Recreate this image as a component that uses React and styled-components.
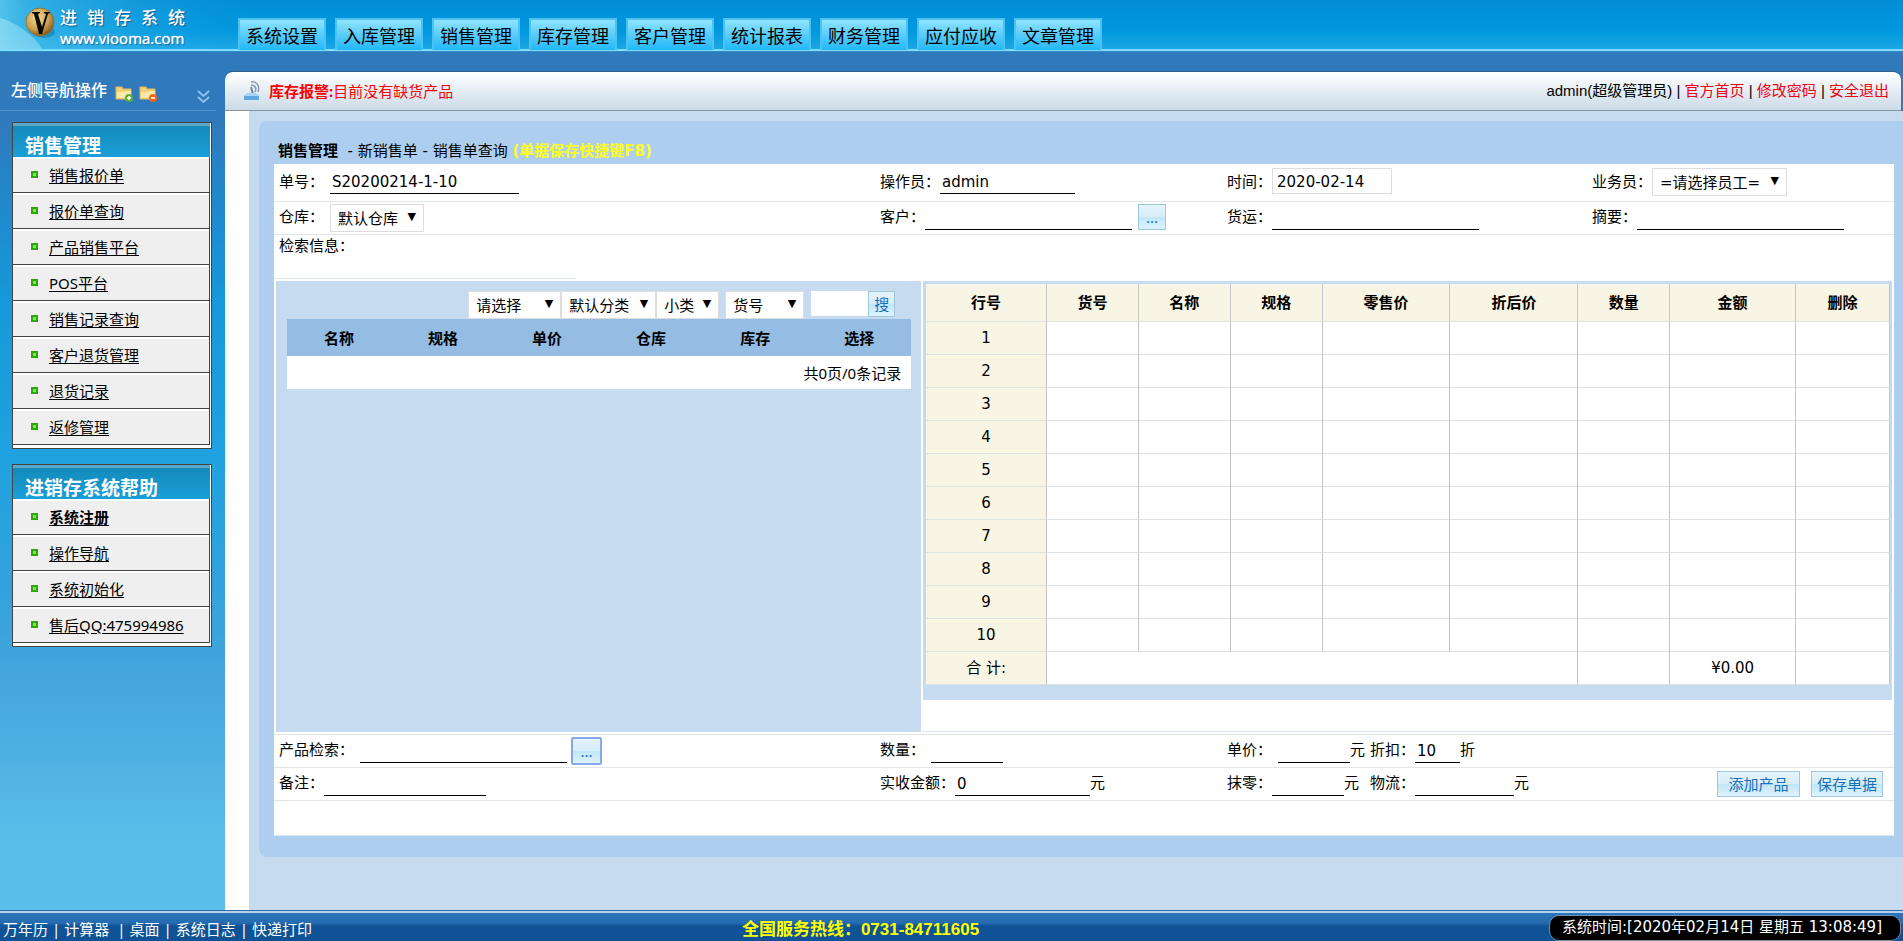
import React from 'react';
import styled, { createGlobalStyle, css } from 'styled-components';

const uiFont = '"Noto Sans", "Noto Sans CJK SC", sans-serif';
const dataFont = '"DejaVu Sans", "Noto Sans CJK SC", sans-serif';

const GlobalStyle = createGlobalStyle`
  *, *::before, *::after { box-sizing: border-box; }
  body { margin: 0; background: #c6dbf0; color: #000; font: 15px/20px ${uiFont}; }
  a { color: inherit; text-decoration: none; }
  button, input, select { margin: 0; font: 15px/20px ${dataFont}; color: #000; border-radius: 0; }
`;

const Page = styled.div`
  min-height: 100vh;
  display: flex;
  flex-direction: column;
`;

/* ---------- top banner ---------- */

const Banner = styled.header`
  position: relative;
  display: flex;
  align-items: flex-end;
  height: 52px;
  background: linear-gradient(#008dd6 0, #0097de 30px, #1ba6e4 48px, #1ba6e4 49px, #7fdcfb 49px, #7fdcfb 51px, #2f8ccb 51px);
`;

const BannerArt = styled.svg`
  position: absolute;
  left: 0;
  top: 0;
`;

const Brand = styled.div`
  position: relative;
  display: flex;
  flex: none;
  width: 238px;
  height: 52px;
  padding: 6px 0 0 26px;
  gap: 5px;
  color: #fff;
`;

const BrandName = styled.div`
  display: flex;
  gap: 10px;
  font: 500 17px/22px "Noto Sans CJK SC", sans-serif;
  text-shadow: 1px 1px 1px #0b5c94;
`;

const BrandUrl = styled.div`
  font: 15px/20px "Open Sans", sans-serif;
  text-shadow: 0 0 1px #fff, 1px 1px 1px #0b5c94;
`;

const Tabs = styled.nav`
  position: relative;
  display: flex;
  gap: 9px;
  padding-bottom: 2px;
`;

const Tab = styled.a`
  width: 88px;
  height: 32px;
  border: 2px solid #4cc2f0;
  border-bottom: 0;
  background: linear-gradient(#8fe4ff, #4dc8fb 60%, #22b8fb);
  font-size: 18px;
  line-height: 32px;
  text-align: center;
  white-space: nowrap;
`;

/* ---------- body ---------- */

const Body = styled.div`
  flex: 1;
  display: flex;
  background: #c6dbf0;
`;

const Sidebar = styled.aside`
  flex: none;
  width: 225px;
  background: linear-gradient(#3079bb 0, #3079bb 70px, #2386c8 130px, #1698da 250px, #1fa2df 400px, #34a2dc 540px, #43a5dc 620px, #5bbfeb 800px, #5bbfeb);
`;

const SideHead = styled.div`
  display: flex;
  align-items: center;
  height: 59px;
  margin-right: 9px;
  padding: 18px 0 0 11px;
  border-bottom: 1px solid #4e90cc;
  color: #fff;
`;

const SideTitle = styled.span`
  margin-right: 8px;
  font-size: 16px;
  font-weight: 500;
`;

const IconButton = styled.button`
  display: flex;
  padding: 0;
  border: 0;
  background: none;
  margin: ${(p) => (p.$last ? '12px 6px 0 auto' : '6px 6px 0 0')};
`;

const MenuBox = styled.section`
  width: 200px;
  margin: 11px 0 0 12px;
  padding: 0 1px 3px 0;
  border: 1px solid #444;
  background: #fff;
  & + & { margin-top: 15px; }
`;

const MenuTitle = styled.h2`
  margin: 0;
  height: 34px;
  padding: 8px 0 0 12px;
  border-top: 3px solid #5ba9c6;
  background: linear-gradient(#148bbb, #1a9fd8);
  color: #fff;
  font-size: 19px;
  line-height: 24px;
`;

const MenuList = styled.ul`
  margin: 0;
  padding: 0;
  list-style: none;
`;

const MenuItem = styled.li`
  display: flex;
  align-items: center;
  height: 36px;
  padding-left: 18px;
  gap: 11px;
  background: #efefef;
  border: solid #444;
  border-width: 0 1px 1px 0;
  box-shadow: inset 0 2px #fff;
  font-weight: ${(p) => (p.$strong ? 700 : 400)};
  &::before {
    content: "";
    width: 7px;
    height: 7px;
    border: 2px solid #2fa50e;
    background: #7fe84a;
  }
  a { text-decoration: underline; text-underline-offset: 2px; }
`;

const Main = styled.main`
  flex: 1;
  min-width: 0;
  display: flex;
  flex-direction: column;
  background: #3079bb;
`;

const StatusBar = styled.div`
  display: flex;
  align-items: center;
  justify-content: space-between;
  height: 40px;
  margin: 19px 2px 0 0;
  padding: 0 12px 0 18px;
  border-top: 1px solid #2a5f8f;
  border-bottom: 1px solid #8896a3;
  border-radius: 8px 8px 0 0;
  background: linear-gradient(#fff, #cbdbe8);
`;

const Alert = styled.div`
  display: flex;
  align-items: center;
  gap: 5px;
  color: #f00;
`;

const UserLinks = styled.div`
  font: 15px/20px "Liberation Sans", "Noto Sans CJK SC", sans-serif;
  a { color: #f00011; }
`;

const Workspace = styled.div`
  flex: 1;
  padding: 10px 0 53px 10px;
  border-left: 24px solid #fff;
  background: #c6dbf0;
`;

const Panel = styled.div`
  padding: 20px 9px 21px 15px;
  border-radius: 8px 0 0 8px;
  background: #aeceef;
`;

const Crumbs = styled.div`
  height: 23px;
  padding-left: 4px;
  font-family: ${dataFont};
  white-space: pre;
  a:first-child { font-weight: 700; }
`;

const Hint = styled.strong`
  color: #ffff1a;
`;

const Sheet = styled.form`
  margin: 0;
  background: #fff;
  border-bottom: 1px solid #dbe6ee;
`;

const FieldRow = styled.div`
  display: grid;
  grid-template-columns: 601fr 347fr 365fr 307fr;
  height: ${(p) => (p.$tall ? 38 : 33)}px;
  border-bottom: 1px solid #dfe6ea;
`;

const BottomRow = styled(FieldRow)`
  margin-top: 2px;
  height: 34px;
  border-top: 1px solid #dfe6ea;
`;

const Cell = styled.div`
  display: flex;
  align-items: flex-start;
  min-width: 0;
  padding: ${(p) => (p.$tall ? 4 : 2)}px 0 0 5px;
  white-space: nowrap;
  label, label ~ span { padding-top: ${(p) => (p.$tall ? 3 : 2)}px; }
`;

const Subfield = styled.div`
  display: flex;
  flex: none;
  width: 143px;
`;

const Line = styled.input`
  width: ${(p) => p.$w}px;
  height: 26px;
  margin-left: ${(p) => p.$gap ?? 6}px;
  padding: 3px 2px 0;
  border: 0;
  border-bottom: 1px solid #000;
  background: none;
`;

const DateBox = styled(Line)`
  border: 1px solid #ddd;
  padding: 2px 4px 0;
`;

const SelectWrap = styled.span`
  position: relative;
  display: flex;
  width: ${(p) => p.$w}px;
  margin-left: ${(p) => p.$gap ?? 0}px;
  && { padding: 0; }
  &::after {
    content: "▼";
    position: absolute;
    right: 8px;
    top: 3px;
    font: 11px/20px "DejaVu Sans", sans-serif;
    pointer-events: none;
  }
`;

const SelectBox = styled.select`
  appearance: none;
  width: 100%;
  height: 28px;
  padding: 2px 0 0 7px;
  border: 1px solid #ddd;
  background: #fff;
`;

function Select({ w, gap, id, label, text }) {
  return (
    <SelectWrap $w={w} $gap={gap}>
      <SelectBox id={id} aria-label={label}>
        <option>{text}</option>
      </SelectBox>
    </SelectWrap>
  );
}

const Button = styled.button`
  height: 26px;
  width: ${(p) => p.$w}px;
  margin-left: ${(p) => p.$gap || 0}px;
  padding: 0;
  border: 1px solid #9fc6da;
  background: linear-gradient(#e4f4fc, #d6edf9 50%, #c0e6f8 51%, #ddf3fd);
  color: #1a6fb8;
  font-family: ${uiFont};
  ${(p) => p.$focus && css`
    height: 28px;
    border: 2px solid #86a9ea;
    border-radius: 2px;
  `}
`;

const Note = styled.div`
  height: 46px;
  padding: 0 5px;
  &::after {
    content: "";
    display: block;
    width: 302px;
    height: 24px;
    margin-left: -5px;
    border-bottom: 1px solid #dbe6f2;
  }
`;

const Split = styled.div`
  display: grid;
  grid-template-columns: 646fr 970fr;
  gap: 2px;
  margin: 0 2px;
  height: 451px;
`;

const FinderPane = styled.div`
  padding: 10px 10px 0 11px;
  background: #c6dbf0;
`;

const FinderTools = styled.div`
  display: flex;
  justify-content: flex-end;
  height: 28px;
  padding-right: 16px;
`;

const KeywordBox = styled.input`
  width: 57px;
  height: 25px;
  margin-left: 7px;
  border: 0;
  background: #fff;
`;

const FinderTable = styled.table`
  width: 100%;
  border-collapse: collapse;
  table-layout: fixed;
  background: #fff;
  th { height: 37px; padding: 0; background: #95bce2; }
  td { height: 33px; padding: 0 10px; text-align: right; }
`;

const EntryPane = styled.div`
  border-bottom: 1px solid #dbe6ee;
`;

const EntryFrame = styled.div`
  padding: 3px 2px 15px 3px;
  background: #c6dbf0;
`;

const EntryTable = styled.table`
  width: 100%;
  border-collapse: separate;
  border-spacing: 0;
  table-layout: fixed;
  background: #fff;
  font-family: ${dataFont};
  th, td {
    height: 33px;
    padding: 0;
    border-right: 1px solid #c4c4c4;
    border-bottom: 1px solid #dde2e2;
    text-align: center;
    font-weight: 400;
  }
  thead th { height: 38px; font-weight: 700; }
  th { background: #f8f5e4; }
`;

const FooterPad = styled.div`
  height: 34px;
`;

const Actions = styled(Cell)`
  justify-content: flex-end;
  padding: 3px 11px 0 0;
  gap: 11px;
`;

/* ---------- footer ---------- */

const Footer = styled.footer`
  display: grid;
  grid-template-columns: 739fr auto 922fr;
  align-items: center;
  height: 32px;
  padding: 3px 2px 0 3px;
  border-top: 1px solid #2c6aa8;
  border-bottom: 1px solid #06284a;
  background: linear-gradient(#b5d3ee 0, #b5d3ee 2px, #2e76bc 2px, #256bb0 12px, #0f5396 15px, #0f5396);
  color: #fff;
`;

const FooterLinks = styled.div`
  display: flex;
  padding-top: 3px;
  white-space: pre;
  a + a::before { content: "|"; margin: 0 4px; }
`;

const Hotline = styled.strong`
  padding-top: 4px;
  color: #ff0;
  font: 700 17px/22px "Liberation Sans", "Noto Sans CJK SC", sans-serif;
`;

const Clock = styled.time`
  justify-self: end;
  height: 26px;
  padding: 0 18px 0 12px;
  border: 1px solid #6f8faa;
  border-radius: 10px;
  background: #000;
  font-family: ${dataFont};
  line-height: 22px;
  white-space: nowrap;
`;

/* ---------- drawings ---------- */

const LogoMark = styled.svg`
  flex: none;
`;

const Logo = () => (
  <LogoMark width="29" height="32" viewBox="0 0 29 32" aria-hidden="true">
    <defs>
      <radialGradient id="gold" cx=".4" cy=".35" r=".7">
        <stop offset="0" stopColor="#f7dc93" />
        <stop offset=".6" stopColor="#c9a050" />
        <stop offset="1" stopColor="#7a4d12" />
      </radialGradient>
    </defs>
    <ellipse cx="18" cy="26" rx="11" ry="6" fill="#0a4f80" opacity=".35" />
    <circle cx="14" cy="16" r="14" fill="url(#gold)" stroke="#8b7343" />
    <path d="M6 6h8v1l-2 1 4 13 4-13-2-1V6h6v1l-2 1-6 20h-3L8 8 6 7z" fill="#0c0a08" />
  </LogoMark>
);

const Folder = ({ minus }) => (
  <svg width="18" height="17" viewBox="0 0 18 17" aria-hidden="true">
    <path d="M1 2h6l1 2h8v10H1z" fill="#f2cf72" stroke="#e3b95c" />
    <path d="M2 7h7l1-1h6v7H2z" fill="#fdeaa8" />
    <circle cx="14" cy="13" r="4" fill={minus ? '#f26a1b' : '#5dae3d'} />
    <path d="M12 13h4" stroke="#fff" strokeWidth="1.5" />
    {!minus && <path d="M14 11v4" stroke="#fff" strokeWidth="1.5" />}
  </svg>
);

const Chevrons = () => (
  <svg width="13" height="13" viewBox="0 0 13 13" fill="none" stroke="#8dc4ee" strokeWidth="1.8" aria-hidden="true">
    <path d="M1 1l5.500 5L12 1M1 7l5.500 5L12 7" />
  </svg>
);

const Beacon = () => (
  <svg width="21" height="20" viewBox="0 0 21 20" fill="none" aria-hidden="true">
    <path d="M8 1c6-1 9 4 7 10M8 4c4 0 6 3 4 7" stroke="#8a99b8" strokeWidth="1.5" />
    <path d="M8 6l2 7" stroke="#6f86b4" strokeWidth="2" />
    <path d="M1 15l4-3h7l4 3v4H1z" fill="#5fa8e0" />
    <path d="M1 15l4-3h7l4 3z" fill="#a9d2f3" />
  </svg>
);

const tabs = ['系统设置', '入库管理', '销售管理', '库存管理', '客户管理', '统计报表', '财务管理', '应付应收', '文章管理'];
const salesMenu = ['销售报价单', '报价单查询', '产品销售平台', 'POS平台', '销售记录查询', '客户退货管理', '退货记录', '返修管理'];
const helpMenu = ['系统注册', '操作导航', '系统初始化', '售后QQ:475994986'];
const finderColumns = ['名称', '规格', '单价', '仓库', '库存', '选择'];
const entryColumns = [
  ['行号', 121], ['货号', 92], ['名称', 92], ['规格', 92], ['零售价', 128],
  ['折后价', 128], ['数量', 92], ['金额', 126], ['删除', 94],
];
const entryTotal = entryColumns.reduce((sum, [, w]) => sum + w, 0);

function Menu({ title, items, strongFirst }) {
  return (
    <MenuBox>
      <MenuTitle>{title}</MenuTitle>
      <MenuList>
        {items.map((t, i) => (
          <MenuItem key={t} $strong={strongFirst && i === 0}><a href="#">{t}</a></MenuItem>
        ))}
      </MenuList>
    </MenuBox>
  );
}

function Field({ id, label, w, gap, value = '', unit, as: As = Line }) {
  return (
    <>
      <label htmlFor={id}>{label}</label>
      <As id={id} $w={w} $gap={gap} defaultValue={value} />
      {unit && <span>{unit}</span>}
    </>
  );
}

export default function App() {
  return (
    <Page lang="zh-CN">
      <GlobalStyle />
      <Banner>
        <BannerArt width="270" height="49" viewBox="0 0 270 49" aria-hidden="true">
          <defs>
            <linearGradient id="glow" x1="0" x2="1" y1="0" y2="0">
              <stop offset="0" stopColor="#6fd6f2" stopOpacity=".8" />
              <stop offset="1" stopColor="#1b9ade" stopOpacity="0" />
            </linearGradient>
          </defs>
          <path d="M0 0h270l-18 20-8 29H0z" fill="url(#glow)" opacity=".7" />
          <path d="M0 0h20c4 22 14 38 30 49H0z" fill="url(#glow)" opacity=".5" />
          <path d="M0 18c14 4 34 16 42 31H0z" fill="#d4f8ff" opacity=".35" />
        </BannerArt>
        <Brand>
          <Logo />
          <div>
            <BrandName>{[...'进销存系统'].map((c) => <span key={c}>{c}</span>)}</BrandName>
            <BrandUrl>www.viooma.com</BrandUrl>
          </div>
        </Brand>
        <Tabs>{tabs.map((t) => <Tab key={t} href="#">{t}</Tab>)}</Tabs>
      </Banner>

      <Body>
        <Sidebar>
          <SideHead>
            <SideTitle>左侧导航操作</SideTitle>
            <IconButton aria-label="展开全部"><Folder /></IconButton>
            <IconButton aria-label="收起全部"><Folder minus /></IconButton>
            <IconButton $last aria-label="折叠"><Chevrons /></IconButton>
          </SideHead>
          <Menu title="销售管理" items={salesMenu} />
          <Menu title="进销存系统帮助" items={helpMenu} strongFirst />
        </Sidebar>

        <Main>
          <StatusBar>
            <Alert>
              <Beacon />
              <span><b>库存报警:</b>目前没有缺货产品</span>
            </Alert>
            <UserLinks>
              admin(超级管理员) | <a href="#">官方首页</a> | <a href="#">修改密码</a> | <a href="#">安全退出</a>
            </UserLinks>
          </StatusBar>

          <Workspace>
            <Panel>
              <Crumbs>
                <a href="#">销售管理</a>{'  - '}<a href="#">新销售单</a>{' - '}<a href="#">销售单查询</a>{' '}
                <Hint>(单据保存快捷键F8)</Hint>
              </Crumbs>
              <Sheet>
                <FieldRow $tall>
                  <Cell $tall><Field id="no" label="单号：" w={189} value="S20200214-1-10" /></Cell>
                  <Cell $tall><Field id="operator" label="操作员：" w={135} gap={0} value="admin" /></Cell>
                  <Cell $tall><Field id="date" label="时间：" w={120} gap={0} value="2020-02-14" as={DateBox} /></Cell>
                  <Cell $tall>
                    <label htmlFor="staff">业务员：</label>
                    <Select id="staff" w={135} text="=请选择员工=" />
                  </Cell>
                </FieldRow>
                <FieldRow>
                  <Cell>
                    <label htmlFor="store">仓库：</label>
                    <Select id="store" w={94} gap={6} text="默认仓库" />
                  </Cell>
                  <Cell>
                    <Field id="client" label="客户：" w={207} gap={0} />
                    <Button type="button" $w={28} $gap={6}>...</Button>
                  </Cell>
                  <Cell><Field id="freight" label="货运：" w={207} gap={0} /></Cell>
                  <Cell><Field id="summary" label="摘要：" w={207} gap={0} /></Cell>
                </FieldRow>
                <Note>检索信息：</Note>

                <Split>
                  <FinderPane>
                    <FinderTools>
                      <Select w={93} label="供应商" text="请选择" />
                      <Select w={95} label="分类" text="默认分类" />
                      <Select w={63} label="小类" text="小类" />
                      <Select w={79} gap={6} label="检索字段" text="货号" />
                      <KeywordBox aria-label="关键字" />
                      <Button type="button" $w={27}>搜</Button>
                    </FinderTools>
                    <FinderTable>
                      <thead><tr>{finderColumns.map((c) => <th key={c}>{c}</th>)}</tr></thead>
                      <tbody><tr><td colSpan={6}>共0页/0条记录</td></tr></tbody>
                    </FinderTable>
                  </FinderPane>
                  <EntryPane>
                    <EntryFrame>
                      <EntryTable>
                        <colgroup>
                          {entryColumns.map(([c, w]) => <col key={c} style={{ width: `${(w / entryTotal) * 100}%` }} />)}
                        </colgroup>
                        <thead><tr>{entryColumns.map(([c]) => <th key={c}>{c}</th>)}</tr></thead>
                        <tbody>
                          {Array.from({ length: 10 }, (_, r) => (
                            <tr key={r}>
                              <th scope="row">{r + 1}</th>
                              {entryColumns.slice(1).map(([c]) => <td key={c} />)}
                            </tr>
                          ))}
                        </tbody>
                        <tfoot>
                          <tr>
                            <th scope="row">合 计:</th>
                            <td colSpan={5} />
                            <td />
                            <td>¥0.00</td>
                            <td />
                          </tr>
                        </tfoot>
                      </EntryTable>
                    </EntryFrame>
                  </EntryPane>
                </Split>

                <BottomRow>
                  <Cell>
                    <Field id="find" label="产品检索：" w={207} />
                    <Button type="button" $w={31} $gap={4} $focus>...</Button>
                  </Cell>
                  <Cell><Field id="qty" label="数量：" w={72} /></Cell>
                  <Cell>
                    <Subfield><Field id="price" label="单价：" w={72} unit="元" /></Subfield>
                    <Field id="discount" label="折扣：" w={45} gap={0} value="10" unit="折" />
                  </Cell>
                  <Cell />
                </BottomRow>
                <FieldRow>
                  <Cell><Field id="remark" label="备注：" w={162} gap={0} /></Cell>
                  <Cell><Field id="received" label="实收金额：" w={135} gap={0} value="0" unit="元" /></Cell>
                  <Cell>
                    <Subfield><Field id="round" label="抹零：" w={72} gap={0} unit="元" /></Subfield>
                    <Field id="logistics" label="物流：" w={99} gap={0} unit="元" />
                  </Cell>
                  <Actions>
                    <Button type="button" $w={83}>添加产品</Button>
                    <Button type="button" $w={72}>保存单据</Button>
                  </Actions>
                </FieldRow>
                <FooterPad />
              </Sheet>
            </Panel>
          </Workspace>
        </Main>
      </Body>

      <Footer>
        <FooterLinks>
          <a href="#">万年历</a><a href="#">{'计算器 '}</a><a href="#">桌面</a><a href="#">系统日志</a><a href="#">快递打印</a>
        </FooterLinks>
        <Hotline>全国服务热线：0731-84711605</Hotline>
        <Clock>系统时间:[2020年02月14日 星期五 13:08:49]</Clock>
      </Footer>
    </Page>
  );
}
